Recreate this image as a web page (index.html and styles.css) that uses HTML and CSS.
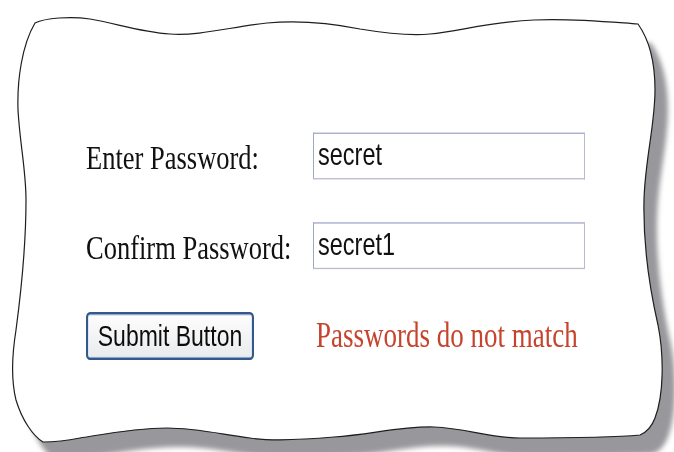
FILE: index.html
```html
<!DOCTYPE html>
<html>
<head>
  <meta charset="UTF-8">
  <title>Password Check</title>
  <link rel="stylesheet" href="styles.css">
</head>
<body>
<div class="sheet">
  <!-- torn paper background with its drop shadow -->
  <svg class="paper" width="674" height="452" viewBox="0 0 674 452">
    <defs>
      <filter id="soft" x="-5%" y="-5%" width="115%" height="115%">
        <feGaussianBlur stdDeviation="2.5"/>
      </filter>
      <path id="edge" d="M35,23 C45,18 70,16 90,19 C115,23 140,32 170,34 C200,36 230,27 267,23 C300,20 330,23 360,29 C390,34 410,36 430,34 C460,31 490,22 534,20 C570,18 610,22 638,24
        C648,38 655,60 655,90 C655,125 645,160 644,200 C643,245 650,290 658,325 C664,355 664,395 655,418 C652,426 647,432 640,435
        C620,437 560,438 520,438 C490,438 465,428 434,427 C400,426 370,435 334,437 C300,440 270,441 250,438 C220,434 195,428 167,428 C135,428 105,434 80,438 C65,441 52,442 43,442
        C33,436 22,420 16,400 C11,380 12,355 16,330 C20,300 26,250 26,200 C26,170 20,145 18,110 C17,80 22,45 35,23 Z"/>
    </defs>
    <use href="#edge" class="shadow" transform="translate(13 19)" filter="url(#soft)"/>
    <use href="#edge" class="outline"/>
  </svg>

  <form class="form">
    <label class="label" for="pwd">Enter Password:</label>
    <input class="field" id="pwd" type="text" value="secret">
    <label class="label" for="pwd2">Confirm Password:</label>
    <input class="field" id="pwd2" type="text" value="secret1">
    <button class="submit" type="button">Submit Button</button>
    <span class="message">Passwords do not match</span>
  </form>
</div>
</body>
</html>
```

FILE: styles.css
```css
* {
  margin: 0;
  padding: 0;
}
body {
  background-color: #fff;
}
.sheet {
  position: relative;
  width: 674px;
  height: 452px;
  overflow: hidden;
}
.paper {
  position: absolute;
  left: 0;
  top: 0;
}
.paper .shadow {
  fill: #98989c;
}
.paper .outline {
  fill: #fff;
  stroke: #1e1e1e;
  stroke-width: 1.2;
}
/* the whole form is drawn a bit tall */
.form {
  position: relative;
  display: grid;
  grid-template-columns: 227px 272px;
  grid-template-rows: 36px 36px 37px;
  row-gap: 33px;
  align-items: center;
  padding: 102px 0 0 86px;
  transform: scaleY(1.3);
  transform-origin: 0 0;
}
.form .label {
  font-family: "Liberation Serif", serif;
  font-size: 26.5px;
  color: #111;
  padding-top: 2px;
}
.form .field {
  box-sizing: border-box;
  width: 272px;
  height: 36px;
  padding: 0 4px 2px 4px;
  border: 1px solid #a2a7c8;
  border-right-color: #b9bccd;
  border-bottom-color: #b9bccd;
  background-color: #fff;
  font-family: "Liberation Sans", Arial, sans-serif;
  font-size: 23.5px;
  color: #111;
  outline: none;
}
.form .submit {
  justify-self: start;
  box-sizing: border-box;
  width: 168px;
  height: 37px;
  border: 2px solid #33588f;
  border-radius: 4px;
  background: linear-gradient(#fdfdfd, #eaebee);
  box-shadow: inset 0 0 0 1px #dde5f1;
  font-family: "Liberation Sans", Arial, sans-serif;
  font-size: 23px;
  color: #0d0d0d;
}
.form .message {
  margin-left: 3px;
  font-family: "Liberation Serif", serif;
  font-size: 27px;
  color: #c6442d;
}
```
